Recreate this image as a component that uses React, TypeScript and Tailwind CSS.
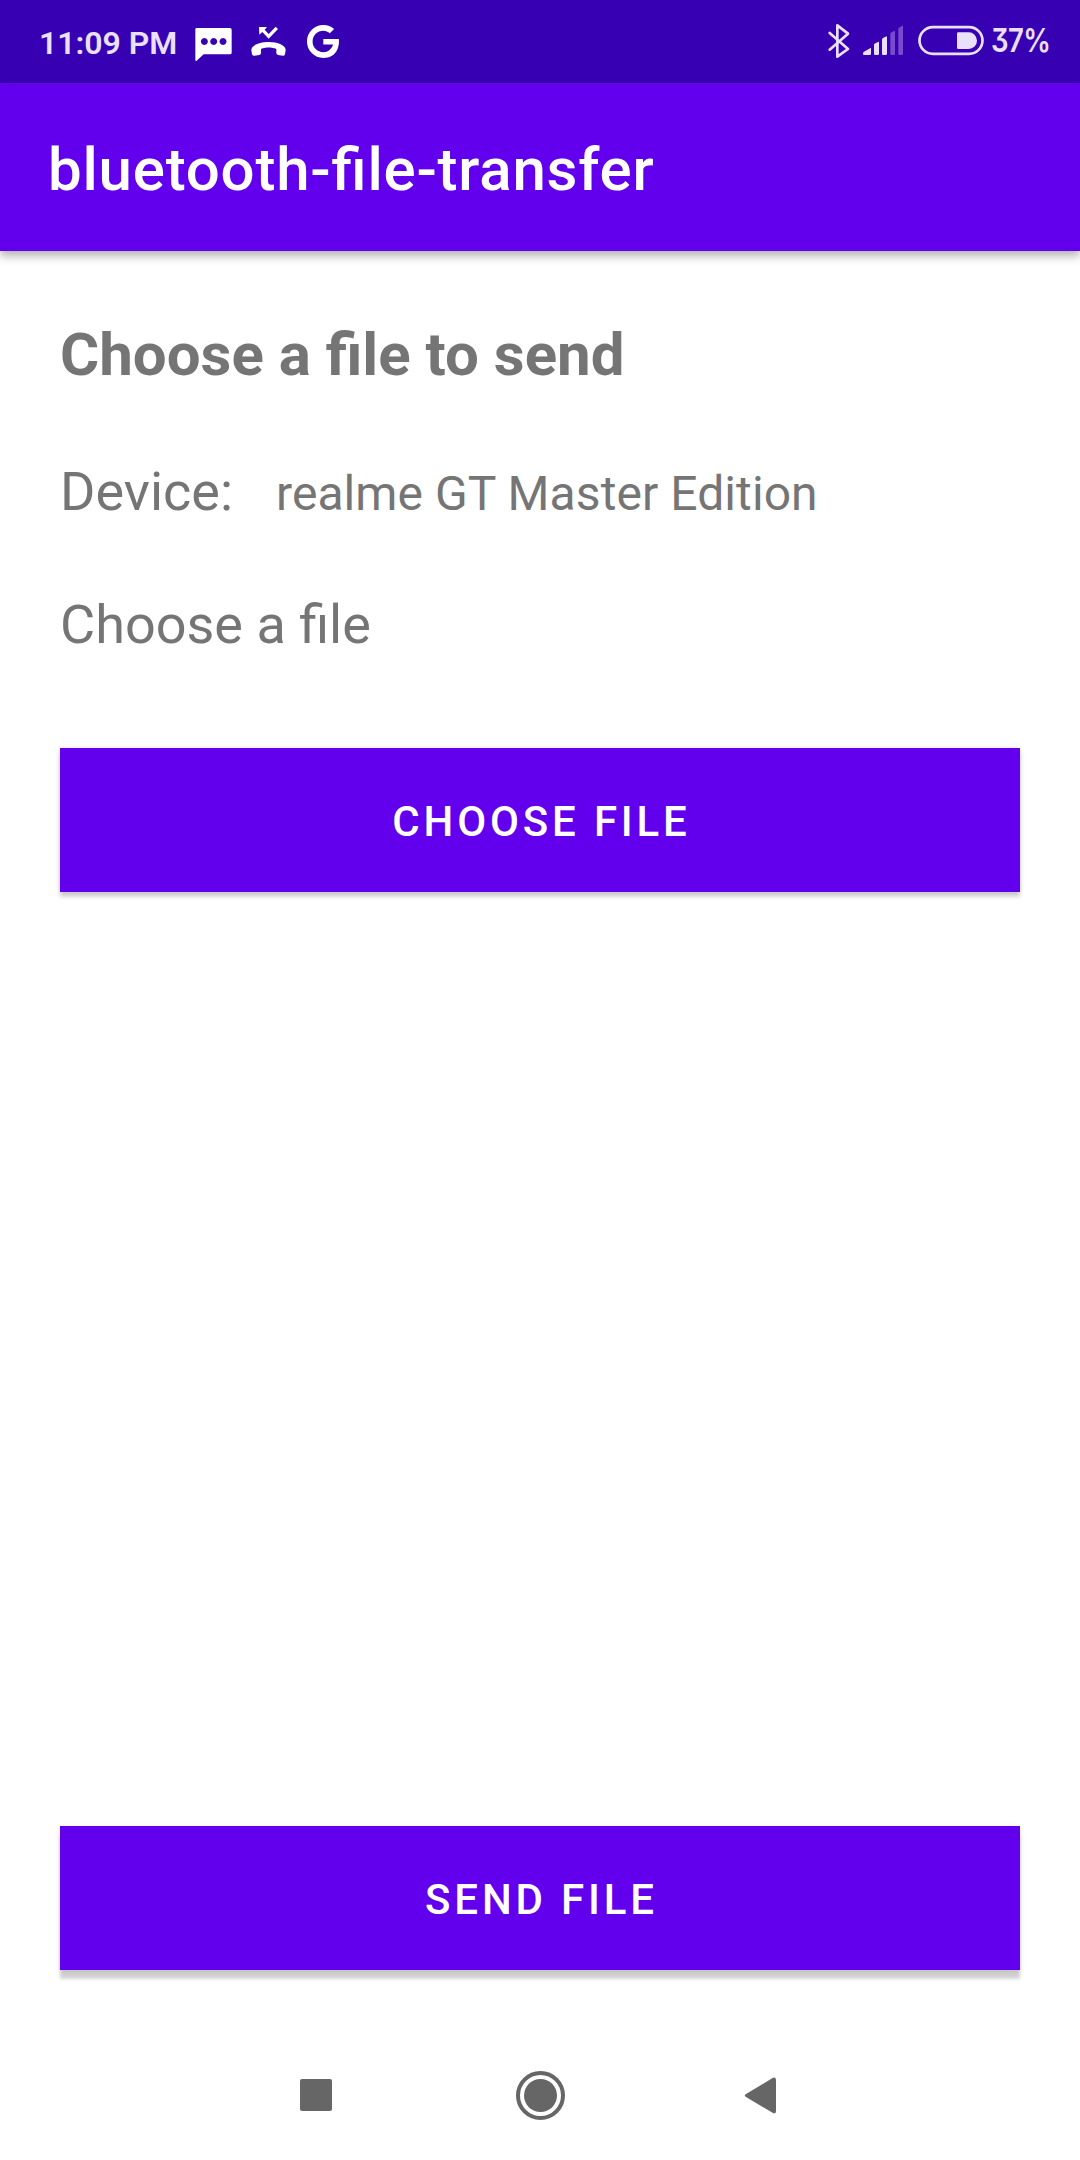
function StatusBar() {
  return (
    <div className="flex h-[83px] items-center justify-between bg-[#3700b3] text-[#ebe0fb]">
      <div className="flex h-full items-center">
        <span className="ml-[39px] mt-[3px] w-[156px] whitespace-nowrap text-[32px] leading-none font-semibold">11:09 PM</span>
        <svg className="h-[83px] w-[150px]" viewBox="585 0 450 249" fill="#fff">
          <path
            fillRule="evenodd"
            d="M590 84H690Q695 84 695 89V158Q695 163 690 163H611L590 182Q586 185 586 179V88Q586 84 590 84ZM613 114a10.500 10.500 0 1 0 .1 0ZM641 114a10.500 10.500 0 1 0 .1 0ZM669 114a10.500 10.500 0 1 0 .1 0Z"
          />
          <path d="M777 81H801L794 89L806 102L827 80L834 87L806 116L787 96L778 104Z" />
          <path d="M754 150C754 136 778 126 806 126C834 126 857 136 857 150L855 163Q854 168 849 167L834 165Q829 164 829 159V147C816 141 796 141 783 147V159Q783 164 778 165L763 167Q757 168 756 163Z" />
          <path
            transform="translate(908.500 65.200) scale(4.890 4.930)"
            d="M12.545 10.450v3.400h6.050c-.8 2.650-3.100 4.700-6.050 4.700a6.550 6.550 0 1 1 0-13.100c1.600 0 2.950.6 4 1.550l2.650-2.650A9.969 9.969 0 0 0 12.545 2C7.021 2 2.543 6.477 2.543 12s4.478 10 10.002 10c8.100 0 10.050-6.800 9.550-11.550z"
          />
        </svg>
      </div>
      <div className="flex h-full items-center">
        <svg className="h-[83px] w-[164px]" viewBox="75 0 492 249">
          <path d="M89 99L144 147L112 170V76L144 101L89 149" fill="none" stroke="#ebe0fb" strokeWidth="8" strokeLinejoin="round" strokeLinecap="round" />
          <g fill="#ebe0fb">
            <path d="M189 160Q189 157 192 155L213 143V161Q213 165 209 165H192Q189 165 189 162Z" />
            <path d="M222 133Q223 130 237 125V161Q237 165 233 165H226Q222 165 222 161Z" />
            <path d="M246 118Q247 114 261 109V161Q261 165 257 165H250Q246 165 246 161Z" />
          </g>
          <g fill="#774bcb">
            <path d="M271 101Q272 97 285 92V161Q285 165 281 165H275Q271 165 271 161Z" />
            <path d="M295 86Q296 82 309 77V161Q309 165 305 165H299Q295 165 295 161Z" />
          </g>
          <rect x="358.500" y="81.500" width="189" height="80" rx="40" fill="none" stroke="#ebe0fb" strokeWidth="8" />
          <path d="M475 97H506A25 25 0 0 1 506 147H475Q471 147 471 143V101Q471 97 475 97Z" fill="#ebe0fb" />
        </svg>
        <div className="w-[91px]">
          <span className="mt-px ml-[2px] inline-block origin-left scale-x-[0.86] whitespace-nowrap font-[Inter] text-[32px] leading-none font-semibold tracking-[-0.02em] [font-feature-settings:'cv09']">
            37%
          </span>
        </div>
      </div>
    </div>
  );
}

function Button({ label, shadow }: { label: string; shadow: string }) {
  return (
    <button
      className={`flex h-[144px] w-full items-center justify-center bg-[#6200ee] pt-[3px] pl-[3px] text-[42px] leading-none font-medium tracking-[0.0915em] text-white ${shadow}`}
    >
      {label}
    </button>
  );
}

function NavigationBar() {
  return (
    <nav className="flex h-[130px] items-center justify-center">
      <svg className="h-[60px] w-[500px]" viewBox="290 2065 500 60" fill="#666">
        <rect x="300" y="2079" width="32" height="32" rx="2" />
        <circle cx="540.500" cy="2095.500" r="22.500" fill="none" stroke="#666" strokeWidth="4" />
        <circle cx="540.500" cy="2095.500" r="16.500" />
        <path d="M773 2077.800Q776 2076.500 776 2080V2111Q776 2114.500 773 2113L746 2097Q743.500 2095.500 746 2094Z" />
      </svg>
    </nav>
  );
}

export default function App() {
  return (
    <div className="flex h-[2160px] w-[1080px] flex-col bg-white font-[Roboto,sans-serif] text-[#757575]">
      <StatusBar />
      <header className="flex h-[168px] items-center bg-[#6200ee] px-12 pt-[5px] text-[60px] leading-none font-medium text-white shadow-[0_5px_9px_rgba(0,0,0,0.3)]">
        <h1 className="tracking-[0.0132em] [font-feature-settings:'liga']">bluetooth-file-transfer</h1>
      </header>
      <main className="flex flex-1 flex-col px-[60px] pt-[69px] pb-[60px]">
        <h2 className="text-[60px] leading-[70px] font-bold">Choose a file to send</h2>
        <div className="mt-[70px] flex items-baseline text-[54px] leading-[63px]">
          <span className="w-[216px]">Device:</span>
          <span className="text-[48px] tracking-[0.08px]">realme GT Master Edition</span>
        </div>
        <p className="mt-[68px] text-[54px] leading-[63px]">Choose a file</p>
        <div className="mt-[92px]">
          <Button label="CHOOSE FILE" shadow="shadow-[0_5px_4px_rgba(0,0,0,0.17),0_0_5px_rgba(0,0,0,0.12)]" />
        </div>
        <div className="mt-auto">
          <Button label="SEND FILE" shadow="shadow-[0_9px_3px_rgba(0,0,0,0.17),0_2px_6px_rgba(0,0,0,0.1)]" />
        </div>
      </main>
      <NavigationBar />
    </div>
  );
}
